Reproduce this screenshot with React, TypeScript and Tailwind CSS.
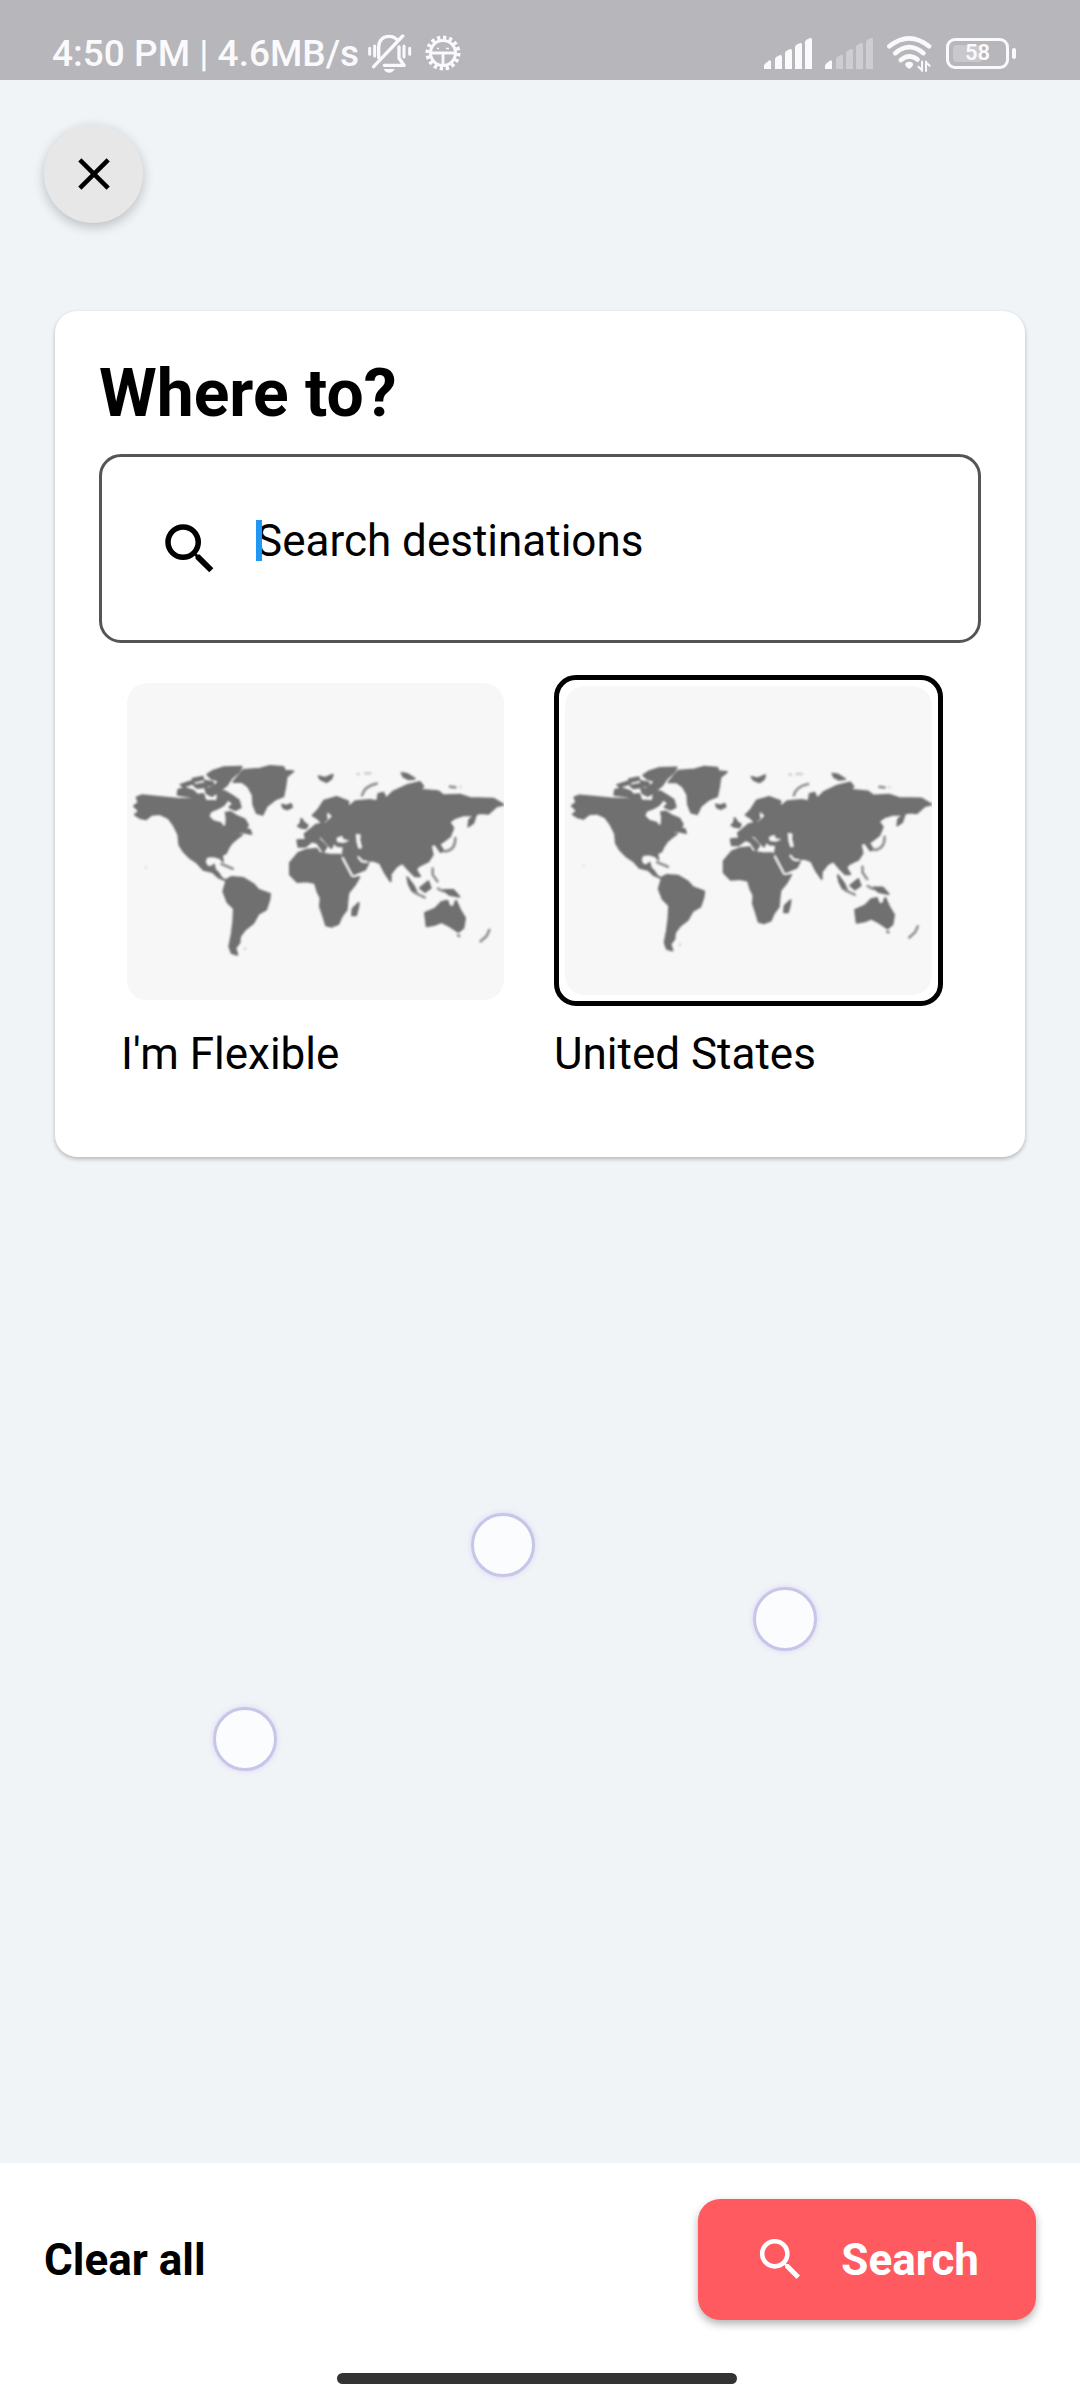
import { MdClose, MdSearch } from "react-icons/md";

const LAND = [
  // North America
  "M80 408L95 402 140 406 200 412 250 414 290 418 325 420 345 408 350 420 340 432 322 442 302 450 295 465 310 480 332 486 342 500 349 490 350 470 347 454 362 452 380 464 404 474 414 492 406 502 420 506 424 518 408 514 390 512 374 520 396 520 380 532 365 545 355 560 348 575 335 582 339 600 330 590 310 584 290 586 284 600 290 615 302 618 312 610 315 625 325 635 335 650 348 658 325 648 308 632 280 625 262 605 240 590 220 570 208 550 205 520 190 490 175 470 150 458 125 460 108 474 90 470 75 460 88 450 72 434 86 424Z",
  // Arctic islands
  "M292 340L310 328 340 318 395 316 386 332 365 350 350 372 330 388 316 372 328 358 305 352Z",
  "M205 385L225 380 250 388 262 400 280 398 285 414 240 406 203 400Z",
  "M212 370L248 358 252 366 220 376ZM248 352L278 346 280 354 256 360ZM252 372L284 366 290 376 262 380ZM284 358L308 362 312 374 290 372ZM286 382L318 378 326 392 306 404 290 396Z",
  "M325 388L345 390 365 402 386 416 392 438 376 446 358 438 370 426 350 412 322 416Z",
  // Greenland, Iceland
  "M370 362L400 326 450 322 480 314 520 317 525 328 550 330 530 346 526 375 520 405 495 415 470 435 458 460 440 455 430 430 428 400 414 375 396 362Z",
  "M516 430L530 433 543 428 546 437 532 444 520 440Z",
  // South America
  "M350 655L365 647 400 650 430 668 445 685 480 698 478 715 468 745 445 758 430 785 405 805 390 825 388 845 376 860 382 880 365 875 358 855 365 820 370 780 372 742 352 722 340 690Z",
  // Africa, Madagascar
  "M565 575L590 565 620 562 628 575 660 580 690 580 700 605 718 635 727 652 748 647 735 670 715 695 712 720 710 745 695 765 685 788 665 796 648 792 640 765 630 735 632 710 622 690 615 665 590 660 562 662 540 640 540 605Z",
  "M746 725L744 740 738 762 726 762 728 742Z",
  // British Isles, Scandinavia
  "M574 472L582 484 593 492 588 501 574 499 564 494 572 486Z",
  "M608 462L624 446 642 418 680 407 715 420 712 442 690 460 670 464 658 454 666 434 656 444 648 458 650 474 636 486 624 472Z",
  // Europe and Asia
  "M562 537L588 535 584 518 600 505 618 490 648 486 672 462 712 440 736 420 780 416 802 420 805 398 820 394 828 412 848 392 890 372 930 362 940 375 930 385 985 390 1000 402 1050 400 1080 410 1150 412 1180 430 1160 435 1135 457 1112 455 1085 462 1060 462 1035 470 1018 482 1030 500 1020 525 1000 540 988 548 1000 568 992 572 975 548 962 552 968 580 955 600 925 615 918 625 930 645 915 645 895 625 878 605 860 615 842 638 842 660 825 635 810 605 790 598 766 598 744 585 752 600 775 606 765 625 728 640 712 610 697 585 702 556 680 553 672 543 664 560 650 545 632 524 624 530 650 556 640 572 622 545 606 540 586 556 565 556Z",
  // Kamchatka, Borneo, New Guinea
  "M1075 495L1078 475 1098 460 1090 485Z",
  "M930 680L955 660 962 680 945 692ZM1000 686L1030 686 1048 706 1018 700Z",
  // Sumatra
  "M892 648L912 675 922 698 906 688 896 668Z",
  // Australia
  "M945 755L975 742 995 722 1012 718 1018 735 1030 738 1038 718 1050 745 1065 770 1060 800 1045 812 1020 795 995 782 975 790 950 795Z",
  // Small northern islands
  "M626 345L645 350 668 340 664 352 650 362 632 354ZM875 335L892 338 914 352 896 354 880 346Z",
].join("");

const COAST =
  "M756 402Q764 374 800 367M1036 530Q1036 568 1004 570M968 622L968 640 982 660M914 694L944 708M984 682L1000 690M335 608L368 622M1138 806L1130 824 1112 840M1044 822L1048 824M1020 376L1036 378";

function WorldMap() {
  return (
    <svg viewBox="51 65 1131 951" className="block w-full rounded-[20px] bg-[#f7f7f7]" aria-hidden="true">
      <defs>
        <filter id="soft-coast">
          <feGaussianBlur stdDeviation="3" />
        </filter>
      </defs>
      <g filter="url(#soft-coast)">
        <path d={LAND} fill="#6f6f6f" stroke="#6f6f6f" strokeWidth="6" strokeLinejoin="round" />
        <path d={COAST} fill="none" stroke="#8f8f8f" strokeWidth="8" strokeLinecap="round" />
        <path
          d="M740 338H750M762 336H784M106 619H110M402 862H408M1048 377H1054"
          stroke="#cfcfcf"
          strokeWidth="8"
        />
        <path
          d="M680 530L696 524 700 534 718 538 700 544 682 542ZM738 518L752 520 750 535 756 560 746 562 740 542Z"
          fill="#f7f7f7"
        />
        <path d="M697 588L727 645M744 586L756 600 772 602" fill="none" stroke="#f7f7f7" strokeWidth="6" />
      </g>
    </svg>
  );
}

function MutedBell() {
  return (
    <svg viewBox="1058 99 134 117" className="h-[39px] w-[46px]" fill="none" stroke="currentColor" strokeWidth="10" strokeLinecap="round" strokeLinejoin="round" aria-hidden="true">
      <path d="M1091 170V138C1091 118 1105 106 1122 106C1133 106 1141 110 1147 117M1152 138V172L1167 193H1108M1163 105L1076 197" />
      <path d="M1064 142V160M1079 135V165M1167 135V168M1184 142V160" strokeWidth="9" />
      <path d="M1106 204H1139Q1134 215 1122 215Q1111 215 1106 204Z" fill="currentColor" stroke="none" />
    </svg>
  );
}

function Gear() {
  return (
    <svg viewBox="0 0 36 36" className="size-9" fill="none" stroke="currentColor" aria-hidden="true">
      <circle cx="18" cy="18" r="12.5" strokeWidth="3" />
      <circle cx="18" cy="18" r="15.5" strokeWidth="4" pathLength="32" strokeDasharray="1.1 0.9" />
      <path d="M6 18H30M18 18V31" strokeWidth="2.8" />
      <path d="M12 13.5H14M21 13.5H24" strokeWidth="1.4" />
    </svg>
  );
}

const BARS = [
  "M0 28Q0 26 2 25L5 22.500Q7 21.500 7 24V31H0Z",
  "M11 21Q11 19.500 13 18.500L16 17Q18 16.500 18 18.500V31H11Z",
  "M21 15Q21 13.500 23 12.500L26 11Q28 10.500 28 12.500V31H21Z",
  "M31 9Q31 7.500 33 6.500L36 5Q38 4.500 38 6.500V31H31Z",
  "M41 4Q41 2.500 43 1.500L46 0Q48 -0.500 48 1.500V31H41Z",
];

function Signal({ level }: { level: number }) {
  return (
    <svg viewBox="0 0 48 31" className="h-[31px] w-12" fill="currentColor" aria-hidden="true">
      {BARS.map((d, i) => (
        <path key={d} d={d} opacity={i < level ? 1 : 0.35} />
      ))}
    </svg>
  );
}

function Wifi() {
  return (
    <svg viewBox="1001 104 136 112" className="h-[37px] w-[47px]" fill="none" stroke="currentColor" strokeWidth="14" strokeLinecap="round" aria-hidden="true">
      <path d="M1008 138Q1068 90 1128 138M1026 159Q1068 122 1111 159M1043 180Q1068 158 1093 178" />
      <path d="M1056 194Q1056 185 1068 185Q1080 185 1080 194Q1078 202 1068 207Q1058 202 1056 194Z" fill="currentColor" stroke="none" />
      <path d="M1107 184V213M1107 211L1096 200M1119 213V184M1119 186L1130 197" strokeWidth="6" />
    </svg>
  );
}

function Battery() {
  return (
    <div className="flex items-center gap-[3px]">
      <div className="relative flex h-[31px] w-[63px] items-center justify-center rounded-[9px] border-3 border-current">
        <span className="absolute inset-y-1 left-1 w-7 rounded-l-[4px] bg-white/25" />
        <span className="relative text-[22px] leading-none font-semibold">58</span>
      </div>
      <span className="h-[11px] w-1 rounded-sm bg-current" />
    </div>
  );
}

function Destination({ label, selected }: { label: string; selected: boolean }) {
  return (
    <button type="button" aria-pressed={selected} className="flex min-w-0 flex-1 flex-col items-stretch text-left">
      <span className={selected ? "rounded-[22px] border-5 border-black p-1.5" : "rounded-[22px] p-1.5"}>
        <WorldMap />
      </span>
      <span className="mt-[22px] text-[44px] leading-[52px]">{label}</span>
    </button>
  );
}

function Touch({ place }: { place: string }) {
  return (
    <span
      className={`absolute size-[64px] -translate-1/2 rounded-full border-3 border-[#c8c5e8] bg-[#fbfcfe] shadow-[0_0_4px_1px_rgba(205,200,245,0.5)] ${place}`}
    />
  );
}

export default function App() {
  return (
    <div className="flex min-h-screen flex-col bg-[#f0f4f7] font-[Roboto,sans-serif] text-black">
      <header className="flex h-20 items-center justify-between bg-[#b7b6bb] pt-[26px] pr-16 pl-[52px] text-[#fafafc]">
        <div className="flex items-center">
          <span className="text-[37px] leading-none font-medium">4:50 PM | 4.6MB/s</span>
          <span className="ml-2">
            <MutedBell />
          </span>
          <span className="ml-3">
            <Gear />
          </span>
        </div>
        <div className="flex items-center gap-[13px]">
          <Signal level={5} />
          <Signal level={1} />
          <Wifi />
          <Battery />
        </div>
      </header>

      <main className="relative flex-1 px-11 pt-11">
        <button
          type="button"
          aria-label="Close"
          className="flex size-[99px] items-center justify-center rounded-full bg-[#e7e7e7] shadow-[0_4px_12px_rgba(0,0,0,0.22)]"
        >
          <MdClose className="size-[54px]" />
        </button>

        <section className="mx-[11px] mt-[88px] rounded-[22px] bg-white px-11 pt-[45px] pb-[77px] shadow-[0_2px_4px_rgba(0,0,0,0.25)]">
          <h1 className="text-[66px] leading-[76px] font-bold">Where to?</h1>
          <label className="mt-[22px] flex h-[189px] items-center rounded-[22px] border-3 border-[#555] px-[55px]">
            <MdSearch className="size-[66px] shrink-0" />
            <span className="relative mb-4 ml-[33px] flex flex-1 items-center">
              <input
                type="text"
                aria-label="Search destinations"
                placeholder="Search destinations"
                className="w-full bg-transparent text-[44px] leading-[52px] outline-none placeholder:text-black"
              />
              <span className="absolute left-0 h-[41px] w-1.5 bg-[#2196f3]" />
            </span>
          </label>
          <div className="mt-8 mr-[38px] ml-[22px] flex items-end gap-11">
            <Destination label="I'm Flexible" selected={false} />
            <Destination label="United States" selected />
          </div>
        </section>

        <Touch place="top-[1465px] left-[503px]" />
        <Touch place="top-[1539px] left-[785px]" />
        <Touch place="top-[1659px] left-[245px]" />
      </main>

      <footer className="bg-white pt-9 pb-4">
        <div className="flex items-center justify-between px-11">
          <button type="button" className="text-[44px] leading-[52px] font-bold">
            Clear all
          </button>
          <button
            type="button"
            className="flex h-[121px] items-center gap-[33px] rounded-[22px] bg-[#ff5a5f] pr-[57px] pl-[55px] text-[44px] leading-[52px] font-bold text-white shadow-[0_4px_8px_rgba(0,0,0,0.3)]"
          >
            <MdSearch className="size-[55px]" />
            Search
          </button>
        </div>
        <div className="mt-[53px] flex justify-center pr-1.5">
          <div className="h-[11px] w-[400px] rounded-full bg-[#333]" />
        </div>
      </footer>
    </div>
  );
}
